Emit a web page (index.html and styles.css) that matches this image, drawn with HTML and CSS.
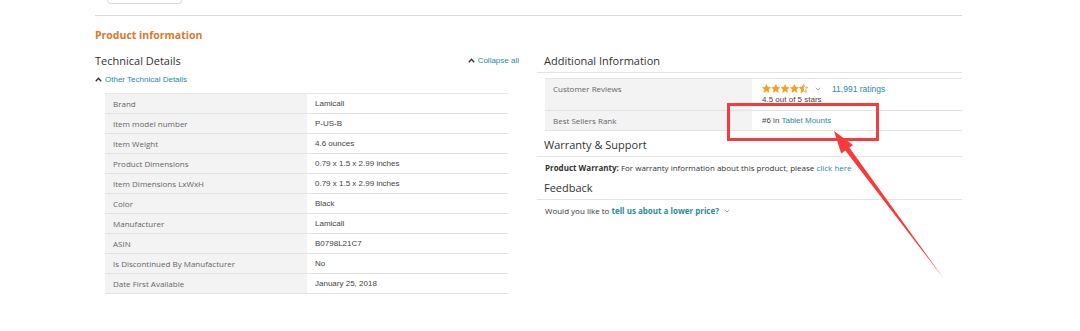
FILE: index.html
```html
<!DOCTYPE html>
<html lang="en">

<head>
  <meta charset="UTF-8">
  <title>Product information</title>
  <link rel="stylesheet" href="styles.css">
</head>

<body>
  <div class="page">
    <div class="tab-btn"></div>
    <div class="rule"></div>
    <h2 class="section-title">Product information</h2>

    <div class="columns">
      <!-- Technical details -->
      <div class="col col-left">
        <div class="col-head">
          <h3>Technical Details</h3>
          <a class="link collapse">
            <svg class="caret" width="7" height="5" viewBox="0 0 7 5"><polyline points="0.8,4.2 3.5,1.3 6.2,4.2" /></svg>
            Collapse all
          </a>
        </div>
        <a class="link sub-toggle">
          <svg class="caret" width="7" height="5" viewBox="0 0 7 5"><polyline points="0.8,4.2 3.5,1.3 6.2,4.2" /></svg>
          Other Technical Details
        </a>
        <table class="spec-table tech">
          <tr><th>Brand</th><td>Lamicall</td></tr>
          <tr><th>Item model number</th><td>P-US-B</td></tr>
          <tr><th>Item Weight</th><td>4.6 ounces</td></tr>
          <tr><th>Product Dimensions</th><td>0.79 x 1.5 x 2.99 inches</td></tr>
          <tr><th>Item Dimensions LxWxH</th><td>0.79 x 1.5 x 2.99 inches</td></tr>
          <tr><th>Color</th><td>Black</td></tr>
          <tr><th>Manufacturer</th><td>Lamicall</td></tr>
          <tr><th>ASIN</th><td>B0798L21C7</td></tr>
          <tr><th>Is Discontinued By Manufacturer</th><td>No</td></tr>
          <tr><th>Date First Available</th><td>January 25, 2018</td></tr>
        </table>
      </div>

      <!-- Additional information -->
      <div class="col col-right">
        <h3 class="block-head">Additional Information</h3>
        <table class="spec-table extra">
          <tr class="reviews">
            <th>Customer Reviews</th>
            <td>
              <div class="rating-line">
                <svg class="stars" width="47" height="9" viewBox="0 0 47 9">
                  <defs>
                    <path id="star" d="M4.5 0.4l1.25 2.7 2.9.35-2.15 2 .6 2.95L4.5 6.95 1.9 8.4l.6-2.95L.35 3.45l2.9-.35z" />
                    <clipPath id="half"><rect x="0" y="0" width="4.5" height="9" /></clipPath>
                  </defs>
                  <use href="#star" x="0" />
                  <use href="#star" x="9.3" />
                  <use href="#star" x="18.6" />
                  <use href="#star" x="27.9" />
                  <g transform="translate(37.2 0)">
                    <use href="#star" class="star-outline" />
                    <use href="#star" clip-path="url(#half)" />
                  </g>
                </svg>
                <svg class="chev" width="6" height="4" viewBox="0 0 6 4"><polyline points="0.7,0.8 3,3 5.3,0.8" /></svg>
                <a class="link ratings">11,991 ratings</a>
              </div>
              <div class="rating-text">4.5 out of 5 stars</div>
            </td>
          </tr>
          <tr>
            <th>Best Sellers Rank</th>
            <td>#6 in <a class="link">Tablet Mounts</a></td>
          </tr>
        </table>

        <h3 class="block-head">Warranty &amp; Support</h3>
        <p class="note"><b>Product Warranty:</b> For warranty information about this product, please <a class="link">click here</a></p>

        <h3 class="block-head">Feedback</h3>
        <p class="note">Would you like to <a class="link strong">tell us about a lower price?</a>
          <svg class="chev" width="6" height="4" viewBox="0 0 6 4"><polyline points="0.7,0.8 3,3 5.3,0.8" /></svg>
        </p>
      </div>
    </div>
  </div>

  <!-- screenshot annotation -->
  <div class="mark-box"></div>
  <svg class="mark-arrow" width="1080" height="331" viewBox="0 0 1080 331">
    <polygon points="834,131 853,145 849.3,147.6 944,279 845.3,150.4 841.2,153.5" />
  </svg>
</body>

</html>
```

FILE: styles.css
```css
body {
  margin: 0;
  background: #fff;
  font-family: "Open Sans", Arial, sans-serif;
  color: #333;
}

.page {
  width: 867px;
  margin-left: 95px;
}

.tab-btn {
  width: 73px;
  height: 3px;
  margin-left: 12px;
  border: 1px solid #dcdcdc;
  border-top: none;
  border-radius: 0 0 5px 5px;
}

.rule {
  height: 1px;
  margin-top: 11px;
  background: #dadada;
}

.section-title {
  margin: 11px 0 0;
  height: 16px;
  line-height: 16px;
  font-size: 10.5px;
  font-weight: bold;
  color: #d9782a;
}

.columns {
  display: flex;
  gap: 18px;
  padding-top: 9px;
}

.col-left {
  width: 424px;
}

.col-right {
  width: 425px;
}

h3 {
  margin: 0;
  font-size: 11px;
  font-weight: normal;
  color: #333;
}

.col-head {
  display: flex;
  justify-content: space-between;
  align-items: center;
  height: 18px;
}

.col-head h3 {
  line-height: 18px;
}

.link {
  color: #2a8ba0;
  font-family: "Liberation Sans", Arial, sans-serif;
  font-size: 8px;
  text-decoration: none;
}

.caret {
  fill: none;
  stroke: #333;
  stroke-width: 1.4;
  margin-right: 1px;
}

.collapse {
  display: flex;
  align-items: center;
  gap: 2px;
  margin-top: -1px;
}

.sub-toggle {
  display: flex;
  align-items: center;
  gap: 2px;
  height: 18px;
}

.spec-table {
  border-collapse: collapse;
  border-top: 1px solid #e6e6e6;
}

.spec-table th,
.spec-table td {
  height: 19px;
  padding: 0 8px;
  border-bottom: 1px solid #e3e3e3;
  font-size: 8px;
  text-align: left;
  vertical-align: middle;
}

.spec-table th {
  background: #f3f3f3;
  font-weight: normal;
  color: #666;
}

.spec-table td {
  font-family: "Liberation Sans", Arial, sans-serif;
  color: #444;
}

.tech {
  width: 403px;
  margin: 5px 0 0 10px;
}

.tech th {
  width: 186px;
}

.extra {
  width: 417px;
  margin: 5px 0 0 8px;
}

.extra th {
  width: 191px;
}

.extra td {
  padding-left: 10px;
}

.reviews th,
.reviews td {
  height: 31px;
  vertical-align: top;
}

.reviews th {
  padding-top: 4px;
  height: 27px;
}

.rating-line {
  display: flex;
  align-items: center;
  height: 11px;
  margin-top: 4px;
}

.stars {
  fill: #f5a01f;
  stroke: #f5a01f;
  stroke-width: 0.4;
}

.stars .star-outline {
  fill: none;
  stroke-width: 0.8;
}

.chev {
  fill: none;
  stroke: #9a9a9a;
  stroke-width: 0.9;
  margin: 0 6px 0 6px;
}

.ratings {
  margin-left: 5px;
  font-size: 8.5px;
}

.rating-text {
  font-size: 8px;
  line-height: 10px;
  margin-top: 1px;
  color: #444;
}

.block-head {
  height: 20px;
  line-height: 18px;
  padding-left: 7px;
  border-bottom: 1px solid #e3e3e3;
}

.spec-table + .block-head {
  margin-top: 5px;
}

.note {
  margin: 3px 0 0 8px;
  height: 16px;
  line-height: 16px;
  font-size: 8px;
  color: #333;
}

.note .link {
  font-family: "Open Sans", Arial, sans-serif;
  font-size: 8px;
}

.note .link.strong {
  font-weight: bold;
}

.note + .block-head {
  margin-top: 3px;
}

.block-head + .note {
  margin-top: 3px;
}

.note .chev {
  margin: 0 0 1px 3px;
}

.mark-box {
  position: absolute;
  left: 727px;
  top: 103px;
  width: 146px;
  height: 32px;
  border: 3px solid #f53b3b;
}

.mark-arrow {
  position: absolute;
  left: 0;
  top: 0;
  fill: #f53b3b;
}
```
